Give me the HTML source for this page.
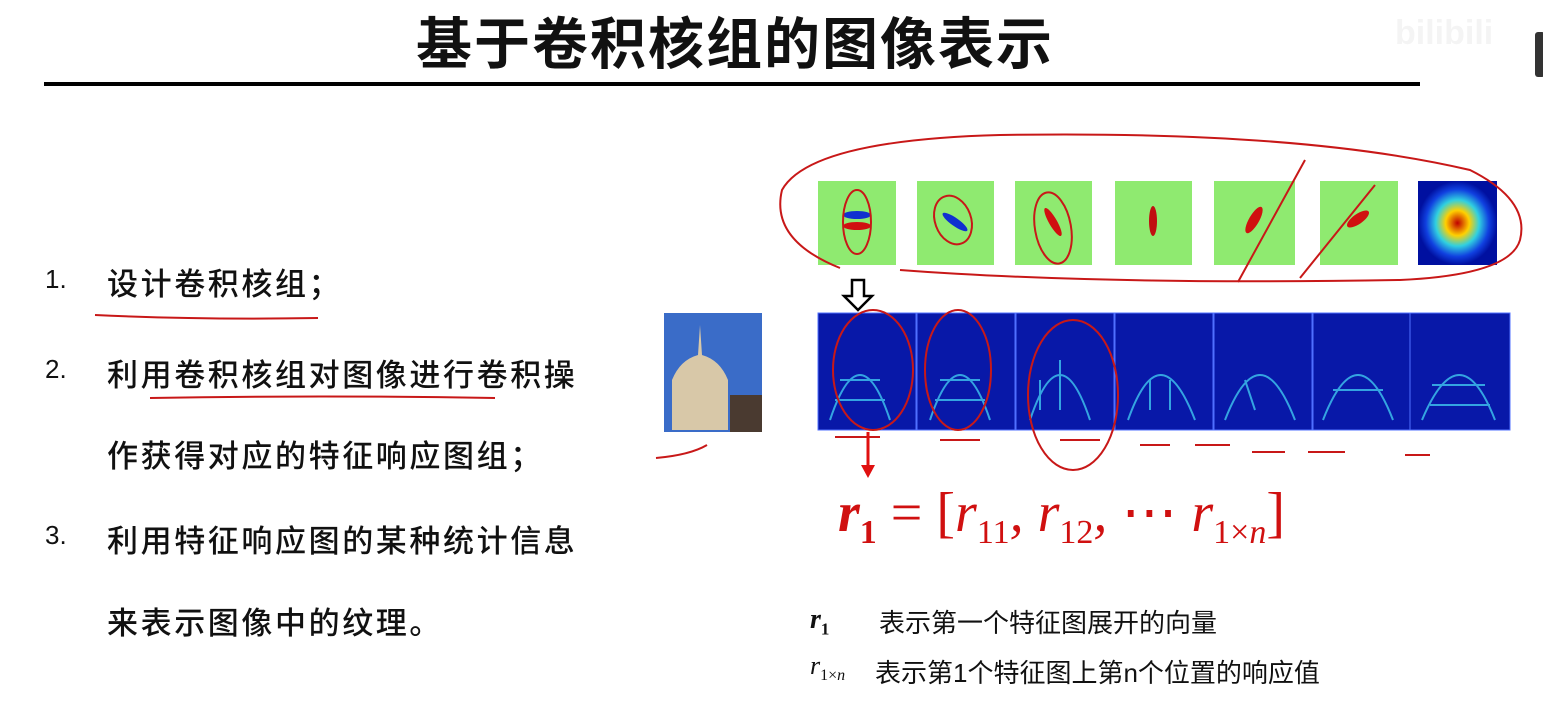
<!DOCTYPE html>
<html><head><meta charset="utf-8"><style>
html,body{margin:0;padding:0;background:#fff;width:1543px;height:724px;overflow:hidden;position:relative;font-family:"Liberation Sans","Noto Sans CJK SC",sans-serif;}
.t{position:absolute;white-space:nowrap;color:#111;}
.li{font-size:31px;letter-spacing:2.6px;font-weight:500;}
.num{font-size:26px;}
</style></head><body>
<div class="t" style="left:0;width:1470px;text-align:center;top:0px;font-size:56px;font-weight:bold;letter-spacing:2px;">基于卷积核组的图像表示</div>
<div style="position:absolute;left:44px;top:82px;width:1376px;height:4px;background:#000"></div>
<div style="position:absolute;left:1535px;top:32px;width:10px;height:45px;background:#333;border-radius:3px"></div>
<div class="t" style="left:1395px;top:14px;font-size:34px;font-weight:bold;color:#f4f4f4">bilibili</div>

<div class="t num" style="left:45px;top:264px">1.</div>
<div class="t li" style="left:107px;top:259px">设计卷积核组；</div>
<div class="t num" style="left:45px;top:354px">2.</div>
<div class="t li" style="left:107px;top:350px">利用卷积核组对图像进行卷积操</div>
<div class="t li" style="left:107px;top:431px">作获得对应的特征响应图组；</div>
<div class="t num" style="left:45px;top:520px">3.</div>
<div class="t li" style="left:107px;top:516px">利用特征响应图的某种统计信息</div>
<div class="t li" style="left:107px;top:598px">来表示图像中的纹理。</div>

<svg style="position:absolute;left:0;top:0" width="1543" height="724">
<defs>
<radialGradient id="g"><stop offset="0" stop-color="#c00000"/><stop offset=".3" stop-color="#ffd000"/><stop offset=".55" stop-color="#30d0e0"/><stop offset=".8" stop-color="#1040e0"/><stop offset="1" stop-color="#0010a0"/></radialGradient>
</defs>
<g>
<rect x="818" y="181" width="78" height="84" fill="#8fea70"/>
<ellipse cx="857" cy="215" rx="14" ry="4" fill="#1030d0"/><ellipse cx="857" cy="226" rx="14" ry="4" fill="#d01010"/>
<rect x="917" y="181" width="77" height="84" fill="#8fea70"/>
<ellipse cx="955" cy="222" rx="15" ry="4" fill="#1030d0" transform="rotate(35 955 222)"/>
<rect x="1015" y="181" width="77" height="84" fill="#8fea70"/>
<ellipse cx="1053" cy="222" rx="16" ry="4" fill="#d01010" transform="rotate(60 1053 222)"/>
<rect x="1115" y="181" width="77" height="84" fill="#8fea70"/>
<ellipse cx="1153" cy="221" rx="4" ry="15" fill="#c01010"/>
<rect x="1214" y="181" width="81" height="84" fill="#8fea70"/>
<ellipse cx="1254" cy="220" rx="15" ry="5" fill="#d01010" transform="rotate(-60 1254 220)"/>
<rect x="1320" y="181" width="78" height="84" fill="#8fea70"/>
<ellipse cx="1358" cy="219" rx="13" ry="5" fill="#d01010" transform="rotate(-35 1358 219)"/>
<rect x="1418" y="181" width="79" height="84" fill="url(#g)"/>
</g>
<g>
<rect x="664" y="313" width="98" height="119" fill="#3a6cc8"/>
<path d="M672 430 L672 380 Q680 360 698 355 L700 325 L702 355 Q720 360 728 380 L728 430 Z" fill="#d8c8a8"/>
<rect x="730" y="395" width="32" height="37" fill="#4a3a30"/>
</g>
<g fill="#0818a8" stroke="#5070ff" stroke-width="1">
<rect x="818" y="313" width="98" height="117"/><rect x="917" y="313" width="98" height="117"/><rect x="1016" y="313" width="98" height="117"/><rect x="1115" y="313" width="98" height="117"/><rect x="1214" y="313" width="98" height="117"/><rect x="1313" y="313" width="97" height="117"/><rect x="1410" y="313" width="100" height="117"/>
</g>
<g stroke="#40c8f0" stroke-width="2" fill="none" opacity=".8">
<path d="M830 420 Q860 330 890 420 M840 380 H880 M835 400 H885"/>
<path d="M930 420 Q960 330 990 420 M940 380 H980 M935 400 H985"/>
<path d="M1030 420 Q1060 330 1090 420 M1040 380 V410 M1060 360 V410"/>
<path d="M1128 420 Q1160 330 1195 420 M1150 380 V410 M1170 380 V410"/>
<path d="M1225 420 Q1260 330 1295 420 M1245 380 L1255 410"/>
<path d="M1323 420 Q1358 330 1393 420 M1333 390 H1383"/>
<path d="M1422 420 Q1460 330 1495 420 M1432 385 H1485 M1430 405 H1490"/>
</g>
<g stroke="#c81818" stroke-width="2" fill="none">
<path d="M840 268 Q770 240 782 190 Q810 140 1000 135 Q1300 130 1470 170 Q1530 200 1520 240 Q1510 275 1400 280 Q1100 285 900 270"/>
<ellipse cx="857" cy="222" rx="14" ry="32"/><ellipse cx="953" cy="220" rx="18" ry="25" transform="rotate(-20 953 220)"/><ellipse cx="1053" cy="228" rx="18" ry="36" transform="rotate(-10 1053 228)"/>
<path d="M1238 282 L1305 160 M1300 278 L1375 185"/>
<ellipse cx="873" cy="370" rx="40" ry="60"/><ellipse cx="958" cy="370" rx="33" ry="60"/><ellipse cx="1073" cy="395" rx="45" ry="75"/>
<path d="M95 315 Q200 320 318 318 M150 398 Q320 395 495 398 M656 458 Q690 455 707 445 M835 437 H880 M940 440 H980 M1060 440 H1100 M1140 445 H1170 M1195 445 H1230 M1252 452 H1285 M1308 452 H1345 M1405 455 H1430"/>
</g>
<path d="M852 280 H864 V296 H872 L858 310 L844 296 H852 Z" fill="#fff" stroke="#000" stroke-width="2.5"/>
<path d="M868 432 V465" stroke="#e01010" stroke-width="3"/><path d="M861 465 L875 465 L868 478 Z" fill="#e01010"/>
</svg>

<div class="t" style="left:838px;top:480px;font-size:56px;color:#d01010;font-family:'Liberation Serif',serif;font-style:italic"><b>r</b><sub style="font-size:34px;font-style:normal;font-weight:bold">1</sub> <span style="font-style:normal">= [</span>r<sub style="font-size:34px;font-style:normal">11</sub>, r<sub style="font-size:34px;font-style:normal">12</sub>, <span style="font-style:normal">⋯</span> r<sub style="font-size:34px;font-style:normal">1×<i>n</i></sub><span style="font-style:normal">]</span></div>

<div class="t" style="left:810px;top:604px;font-size:28px;font-family:'Liberation Serif',serif;font-style:italic;font-weight:bold">r<sub style="font-size:17px;font-style:normal">1</sub></div>
<div class="t" style="left:879px;top:603px;font-size:26px">表示第一个特征图展开的向量</div>
<div class="t" style="left:810px;top:651px;font-size:26px;font-family:'Liberation Serif',serif;font-style:italic">r<sub style="font-size:16px;font-style:normal">1×<i>n</i></sub></div>
<div class="t" style="left:875px;top:653px;font-size:26px">表示第1个特征图上第n个位置的响应值</div>
</body></html>
